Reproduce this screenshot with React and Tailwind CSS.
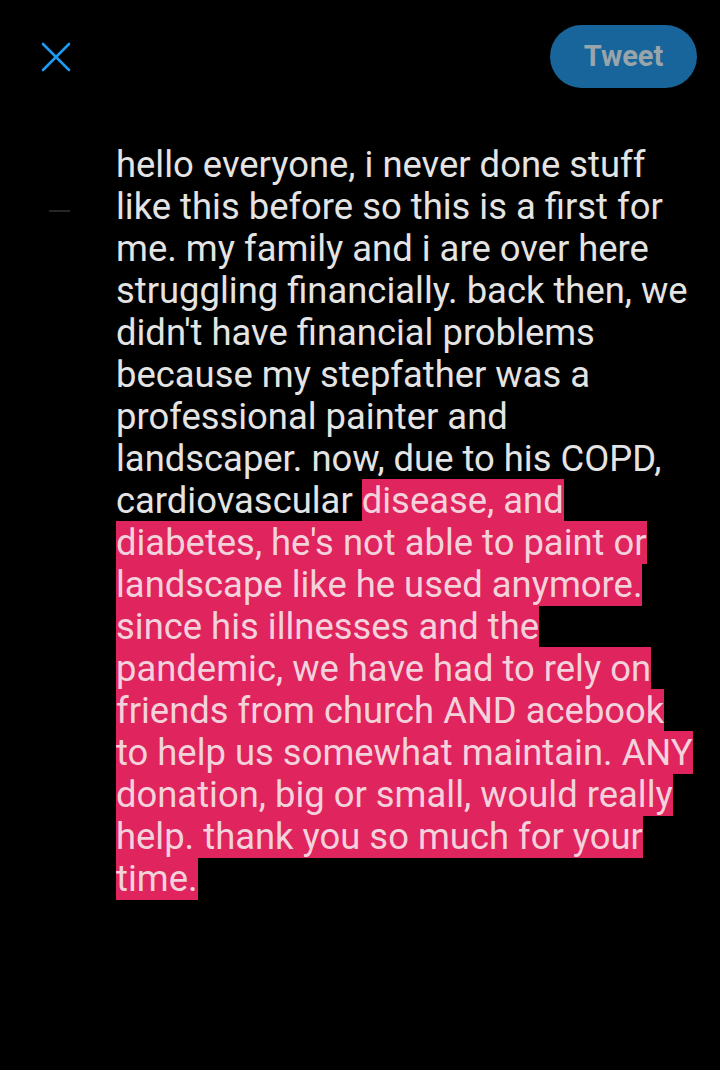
import React from 'react';

const lines = [
  ['hello everyone, i never done stuff', ''],
  ['like this before so this is a first for', ''],
  ['me. my family and i are over here', ''],
  ['struggling financially. back then, we', ''],
  ["didn't have financial problems", ''],
  ['because my stepfather was a', ''],
  ['professional painter and', ''],
  ['landscaper. now, due to his COPD,', ''],
  ['cardiovascular ', 'disease, and'],
  ['', "diabetes, he's not able to paint or"],
  ['', 'landscape like he used anymore.'],
  ['', 'since his illnesses and the'],
  ['', 'pandemic, we have had to rely on'],
  ['', 'friends from church AND acebook'],
  ['', 'to help us somewhat maintain. ANY'],
  ['', 'donation, big or small, would really'],
  ['', 'help. thank you so much for your'],
  ['', 'time.'],
];

export default function App() {
  return (
    <div className="w-[720px] h-[1070px] bg-black overflow-hidden" style={{ fontFamily: 'Roboto, "Noto Sans", sans-serif' }}>
      <div className="flex items-center justify-between h-[113px] pl-[40px] pr-[23px]">
        <button className="w-[32px] h-[32px] flex items-center justify-center">
          <svg width="32" height="32" viewBox="0 0 32 32" fill="none" stroke="#1d9bf0" strokeWidth="2.6" strokeLinecap="round">
            <path d="M3 3 L29 29 M29 3 L3 29" />
          </svg>
        </button>
        <button className="w-[147px] h-[63px] rounded-full bg-[#17659a] text-[#9aa4ab] text-[29px] font-bold">
          Tweet
        </button>
      </div>

      <div className="flex mt-[31px]">
        <div className="w-[116px] shrink-0 pt-[66px] pl-[49px]">
          <div className="w-[21px] h-[2px] bg-[#262626]" />
        </div>
        <div className="text-[36.4px] leading-[42px] text-[#e4e4e4] whitespace-nowrap">
          {lines.map(([plain, marked], i) => (
            <div key={i} className="h-[42px]">
              {plain}
              {marked && <span className="bg-[#e0245e] text-[#f4d2dc]">{marked}</span>}
            </div>
          ))}
        </div>
      </div>
    </div>
  );
}
